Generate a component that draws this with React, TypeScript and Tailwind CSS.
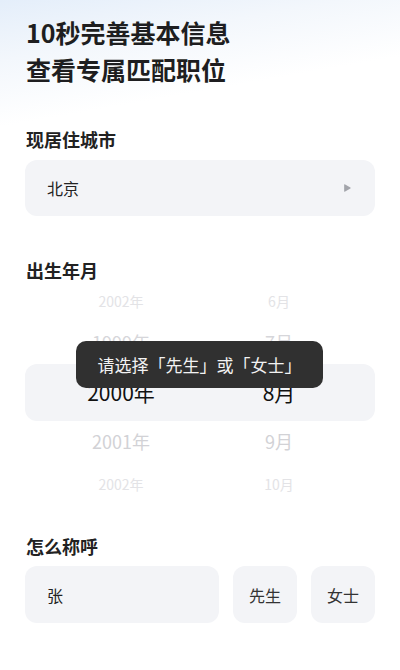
import * as React from "react"

const years = [
  { label: "2002年", h: "h-[38px]", cls: "text-[14px] text-[#e3e3e6]" },
  { label: "1999年", h: "h-[44px]", cls: "text-[18px] text-[#d6d6da]" },
  { label: "2000年", h: "h-[57px]", cls: "text-[21px] text-[#111]" },
  { label: "2001年", h: "h-[40px]", cls: "text-[18px] text-[#d2d2d6]" },
  { label: "2002年", h: "h-[46px]", cls: "text-[14px] text-[#e3e3e6]" },
]

const months = ["6月", "7月", "8月", "9月", "10月"]

function ArrowRight() {
  return (
    <svg width="9" height="10" viewBox="0 0 8 9" className="text-[#a3a5ab]">
      <path d="M1.5 1.2 L6.6 4 Q7.2 4.5 6.6 5 L1.5 7.8 Q1 8.1 1 7.5 L1 1.5 Q1 0.9 1.5 1.2 Z" fill="currentColor" />
    </svg>
  )
}

export default function App() {
  const [gender, setGender] = React.useState<"" | "先生" | "女士">("")

  return (
    <div
      className="relative min-h-[670px] w-[400px] bg-[linear-gradient(170deg,#e4eefa_0%,#f3f7fc_60px,#ffffff_125px)] px-[25px] pt-[14px] text-[#222]"
      style={{ fontFamily: '"Noto Sans CJK SC", "Noto Sans", sans-serif' }}
    >
      <h1 className="pl-px text-[25px] font-bold leading-[37px] text-[#1e1e20]">
        10秒完善基本信息
        <br />
        查看专属匹配职位
      </h1>

      <div className="mt-[39px] pl-px text-[18px] font-semibold leading-[24px] text-[#222]">现居住城市</div>
      <div className="mt-[9px] flex h-[56px] items-center justify-between rounded-xl bg-[#f3f4f7] pl-[22px] pr-[23px]">
        <span className="text-[16px] text-[#222]">北京</span>
        <ArrowRight />
      </div>

      <div className="mt-[42px] pl-px text-[18px] font-semibold leading-[24px] text-[#222]">出生年月</div>
      <div className="px-[17px]">
        {years.map((y, i) => (
          <div
            key={i}
            className={`-mx-[17px] flex items-center px-[17px] ${y.h} ${i === 2 ? "rounded-xl bg-[#f3f4f7]" : ""}`}
          >
            <div className={`w-1/2 text-center ${y.cls}`}>{y.label}</div>
            <div className={`w-1/2 text-center ${y.cls}`}>{months[i]}</div>
          </div>
        ))}
      </div>

      <div className="mt-[27px] pl-px text-[18px] font-semibold leading-[24px] text-[#222]">怎么称呼</div>
      <div className="mt-[8px] flex h-[57px] gap-[14px]">
        <div className="flex flex-1 items-center rounded-xl bg-[#f3f4f7] pl-[22px] text-[16px] text-[#222]">张</div>
        {(["先生", "女士"] as const).map((g) => (
          <button
            key={g}
            onClick={() => setGender(g)}
            className={`flex w-[64px] items-center justify-center rounded-xl text-[16px] ${
              gender === g ? "bg-[#e6f0ff] text-[#2f6bff]" : "bg-[#f3f4f7] text-[#333]"
            }`}
          >
            {g}
          </button>
        ))}
      </div>

      <div className="absolute left-[76px] top-[341px] flex h-[47px] w-[247px] items-center justify-center rounded-[10px] bg-[#303030] text-[17px] text-[#f2f2f2]">
        请选择「先生」或「女士」
      </div>
    </div>
  )
}
